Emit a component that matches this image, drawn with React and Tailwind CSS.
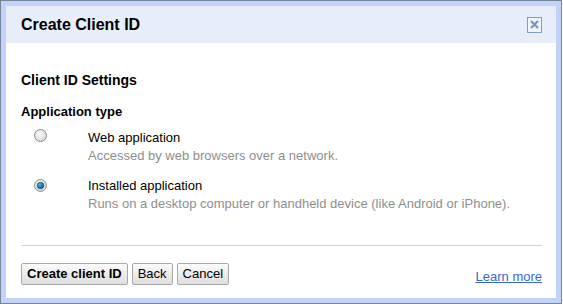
import React from "react";

function Radio({ checked }) {
  return (
    <svg width="13" height="13" viewBox="0 0 13 13" className="shrink-0">
      <defs>
        <radialGradient id={checked ? "rgc" : "rgu"} cx="45%" cy="40%" r="60%">
          <stop offset="0%" stopColor="#ffffff" />
          <stop offset="100%" stopColor="#d4d4d4" />
        </radialGradient>
        <radialGradient id="dot" cx="40%" cy="35%" r="65%">
          <stop offset="0%" stopColor="#4fb6f0" />
          <stop offset="100%" stopColor="#0a4f8a" />
        </radialGradient>
      </defs>
      <circle cx="6.5" cy="6.5" r="6" fill={`url(#${checked ? "rgc" : "rgu"})`} stroke="#8f8f8f" strokeWidth="1" />
      {checked && <circle cx="6.5" cy="6.5" r="3.3" fill="url(#dot)" stroke="#1d3f66" strokeWidth="0.6" />}
    </svg>
  );
}

function Btn({ children, bold }) {
  return (
    <button
      className={
        "h-[22px] px-[5px] rounded-[2px] border border-[#a9a9a9] bg-gradient-to-b from-[#fbfbfb] to-[#dedede] text-[13px] leading-[20px] text-black " +
        (bold ? "font-bold" : "font-normal")
      }
    >
      {children}
    </button>
  );
}

function Option({ checked, title, desc, className, radioPad }) {
  return (
    <div className={"flex " + className}>
      <div className={"w-[67px] pl-[13px] " + radioPad}>
        <Radio checked={checked} />
      </div>
      <div className="text-[13px]">
        <div className="text-black leading-[24px]">{title}</div>
        <div className="text-[#8e8e8e] leading-[12px]">{desc}</div>
      </div>
    </div>
  );
}

export default function App() {
  return (
    <div
      className="w-[563px] h-[307px] bg-white overflow-hidden"
      style={{ fontFamily: '"Liberation Sans", Arial, sans-serif' }}
    >
      <div className="w-[562px] h-[304px] border border-[#76869a] bg-[#c1d3fb] p-[5px]">
        <div className="w-full h-full bg-white flex flex-col">
          <div className="h-[37px] bg-[#e8eef9] flex items-center justify-between pl-[15px] pr-[14px]">
            <div className="text-[16px] font-bold text-black leading-[20px]">Create Client ID</div>
            <div className="w-[15px] h-[16px] border border-[#7f9ccb] bg-[#eef3fc] flex items-center justify-center">
              <svg width="11" height="11" viewBox="0 0 11 11">
                <path d="M2 2 L9 9 M9 2 L2 9" stroke="#7692c2" strokeWidth="2" />
              </svg>
            </div>
          </div>
          <div className="flex-1 flex flex-col pl-[15px] pr-[14px]">
            <div className="mt-[29px] text-[14px] leading-[16px] font-bold text-black">Client ID Settings</div>
            <div className="mt-[16px] text-[13px] leading-[15px] font-bold text-black">Application type</div>
            <Option
              className="mt-[7px]"
              radioPad="pt-[3px]"
              checked={false}
              title="Web application"
              desc="Accessed by web browsers over a network."
            />
            <Option
              className="mt-[12px]"
              radioPad="pt-[5px]"
              checked={true}
              title="Installed application"
              desc="Runs on a desktop computer or handheld device (like Android or iPhone)."
            />
            <div className="mt-[35px] h-px bg-[#c9d5ee]" />
            <div className="mt-[17px] flex items-center">
              <div className="flex gap-[4px]">
                <Btn bold>Create client ID</Btn>
                <Btn>Back</Btn>
                <Btn>Cancel</Btn>
              </div>
              <a className="ml-auto mt-[5px] text-[13px] leading-[15px] text-[#3b67cf] underline">Learn more</a>
            </div>
          </div>
        </div>
      </div>
    </div>
  );
}
